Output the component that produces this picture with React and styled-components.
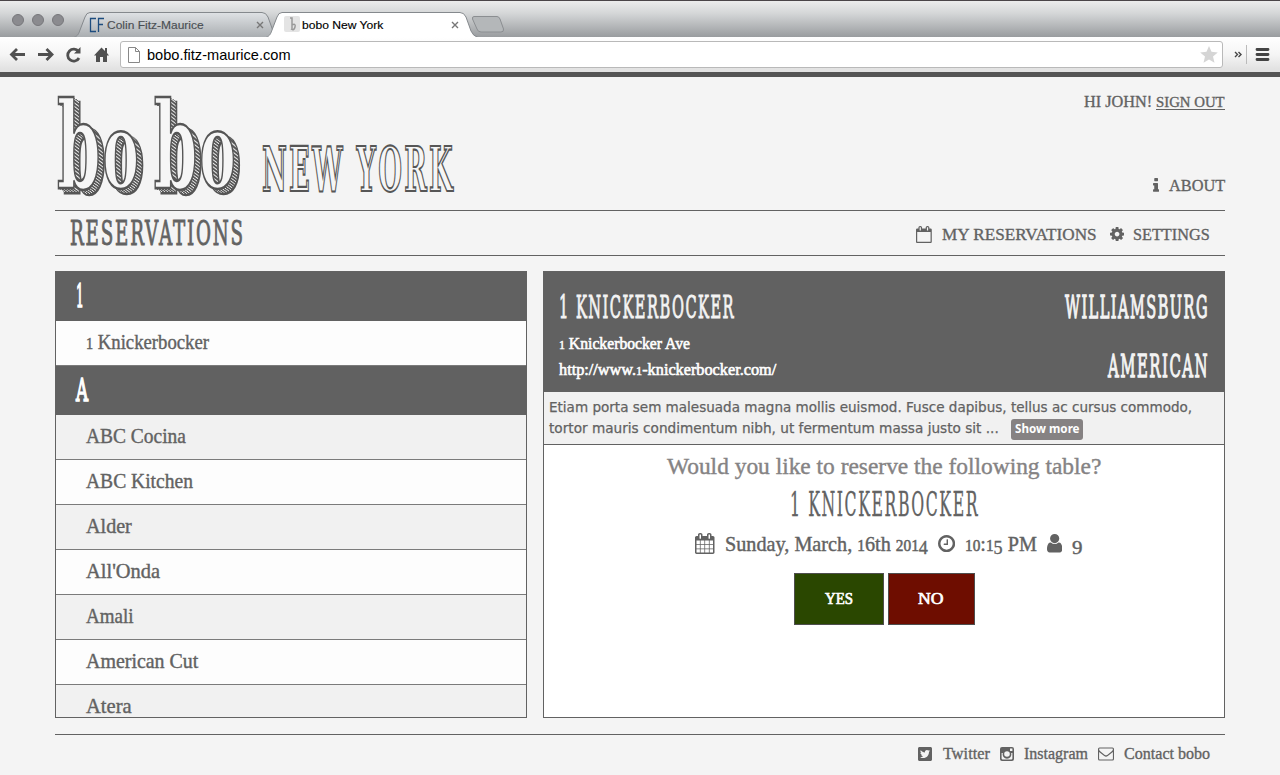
import React, { useLayoutEffect, useRef, useState } from "react";
import styled, { createGlobalStyle } from "styled-components";
import { FaTwitterSquare } from "react-icons/fa";

const slab = '"DejaVu Serif", serif';
const book = '"Liberation Serif", serif';
const ink = "#626262";

const GlobalStyle = createGlobalStyle`
  *, *::before, *::after { box-sizing: border-box; }
  body { margin: 0; background: #f4f4f4; color: ${ink}; font-family: ${book}; overflow: hidden; }
`;

/* ---------- text set to a given measure ---------- */
const FitBox = styled.span`
  display: inline-block;
  flex: none;
  width: ${(p) => p.$w}px;
  white-space: nowrap;
  text-align: left;
`;
const FitInner = styled.span`
  display: inline-block;
  transform-origin: 0 50%;
`;
function Fit({ w, children }) {
  const ref = useRef(null);
  const [scale, setScale] = useState(1);
  useLayoutEffect(() => {
    setScale(w / ref.current.offsetWidth);
  }, [w]);
  return (
    <FitBox $w={w}>
      <FitInner ref={ref} style={{ transform: `scaleX(${scale})` }}>{children}</FitInner>
    </FitBox>
  );
}

const LowDigit = styled.span`
  font-size: 0.76em;
  line-height: 0;
  -webkit-text-stroke: 0.5px currentColor;
`;
const DropDigit = styled.span`
  line-height: 0;
  font-size: 0.9em;
  vertical-align: -0.15em;
`;
const OldStyle = ({ children }) =>
  children.split(/([012]+|[34579]+)/).map((s, i) =>
    /^[012]+$/.test(s) ? <LowDigit key={i}>{s}</LowDigit>
      : /^[34579]+$/.test(s) ? <DropDigit key={i}>{s}</DropDigit> : s
  );

/* ---------- icons ---------- */
const Svg = styled.svg`
  display: block;
  flex: none;
  fill: currentColor;
`;
const paths = {
  calendar: "M192 1664h288v-288h-288v288zm352 0h320v-288h-320v288zm-352-352h288v-320h-288v320zm352 0h320v-320h-320v320zm-352-384h288v-288h-288v288zm736 736h320v-288h-320v288zm-384-736h320v-288h-320v288zm768 736h288v-288h-288v288zm-384-352h320v-320h-320v320zm-352-864v-288q0-13-9.5-22.5t-22.5-9.5h-64q-13 0-22.5 9.5t-9.5 22.5v288q0 13 9.5 22.5t22.5 9.5h64q13 0 22.5-9.5t9.5-22.5zm736 864h288v-320h-288v320zm-384-384h320v-288h-320v288zm384 0h288v-288h-288v288zm32-480v-288q0-13-9.5-22.5t-22.5-9.5h-64q-13 0-22.5 9.5t-9.5 22.5v288q0 13 9.5 22.5t22.5 9.5h64q13 0 22.5-9.5t9.5-22.5zm384-64v1280q0 52-38 90t-90 38h-1408q-52 0-90-38t-38-90v-1280q0-52 38-90t90-38h128v-96q0-66 47-113t113-47h64q66 0 113 47t47 113v96h384v-96q0-66 47-113t113-47h64q66 0 113 47t47 113v96h128q52 0 90 38t38 90z",
  calendarO: "M192 1664h1408v-1024h-1408v1024zm384-1216v-288q0-14-9-23t-23-9h-64q-14 0-23 9t-9 23v288q0 14 9 23t23 9h64q14 0 23-9t9-23zm768 0v-288q0-14-9-23t-23-9h-64q-14 0-23 9t-9 23v288q0 14 9 23t23 9h64q14 0 23-9t9-23zm384-64v1280q0 52-38 90t-90 38h-1408q-52 0-90-38t-38-90v-1280q0-52 38-90t90-38h128v-96q0-66 47-113t113-47h64q66 0 113 47t47 113v96h384v-96q0-66 47-113t113-47h64q66 0 113 47t47 113v96h128q52 0 90 38t38 90z",
  clock: "M1024 544v448q0 14-9 23t-23 9h-320q-14 0-23-9t-9-23v-64q0-14 9-23t23-9h224v-352q0-14 9-23t23-9h64q14 0 23 9t9 23zm416 352q0-148-73-273t-198-198-273-73-273 73-198 198-73 273 73 273 198 198 273 73 273-73 198-198 73-273zm224 0q0 209-103 385.5t-279.5 279.5-385.5 103-385.5-103-279.5-279.5-103-385.5 103-385.5 279.5-279.5 385.5-103 385.5 103 279.5 279.5 103 385.5z",
  user: "M1536 1399q0 109-62.5 187t-150.5 78h-854q-88 0-150.5-78t-62.5-187q0-85 8.5-160.5t31.5-152 58.5-131 94-89 134.5-34.5q131 128 313 128t313-128q76 0 134.5 34.5t94 89 58.5 131 31.5 152 8.5 160.5zm-256-887q0 159-112.5 271.5t-271.5 112.5-271.5-112.5-112.5-271.5 112.5-271.5 271.5-112.5 271.5 112.5 112.5 271.5z",
  info: "M1216 1344v128q0 26-19 45t-45 19h-512q-26 0-45-19t-19-45v-128q0-26 19-45t45-19h64v-384h-64q-26 0-45-19t-19-45v-128q0-26 19-45t45-19h384q26 0 45 19t19 45v576h64q26 0 45 19t19 45zm-128-1152v192q0 26-19 45t-45 19h-256q-26 0-45-19t-19-45v-192q0-26 19-45t45-19h256q26 0 45 19t19 45z",
  cog: "M1152 896q0-106-75-181t-181-75-181 75-75 181 75 181 181 75 181-75 75-181zm512-109v222q0 12-8 23t-20 13l-185 28q-19 54-39 91 35 50 107 138 10 12 10 25t-9 23q-27 37-99 108t-94 71q-12 0-26-9l-138-108q-44 23-91 38-16 136-29 186-7 28-36 28h-222q-14 0-24.5-8.5t-11.5-21.5l-28-184q-49-16-90-37l-141 107q-10 9-25 9-14 0-25-11-126-114-165-168-7-10-7-23 0-12 8-23 15-21 51-66.5t54-70.5q-27-50-41-99l-183-27q-13-2-21-12.5t-8-23.5v-222q0-12 8-23t19-13l186-28q14-46 39-92-40-57-107-138-10-12-10-24 0-10 9-23 26-36 98.5-107.5t94.5-71.5q13 0 26 10l138 107q44-23 91-38 16-136 29-186 7-28 36-28h222q14 0 24.5 8.5t11.5 21.5l28 184q49 16 90 37l142-107q9-9 24-9 13 0 25 10 129 119 165 170 7 8 7 22 0 12-8 23-15 21-51 66.5t-54 70.5q26 50 41 98l183 28q13 2 21 12.5t8 23.5z",
};
const boxes = {
  calendar: [64, 0, 1664, 1792],
  calendarO: [64, 0, 1664, 1792],
  clock: [128, 128, 1536, 1536],
  user: [256, 128, 1280, 1536],
  info: [576, 128, 640, 1408],
  cog: [128, 128, 1536, 1536],
};
function Icon({ name, em }) {
  const b = boxes[name];
  return (
    <Svg width={(b[2] * em) / 1792} height={(b[3] * em) / 1792} viewBox={b.join(" ")}>
      <path d={paths[name]} />
    </Svg>
  );
}

/* ---------- browser chrome ---------- */
const Strip = styled.div`
  height: 37px;
  display: flex;
  align-items: flex-end;
  padding-left: 12px;
  border-top: 1px solid #4b4548;
  background: linear-gradient(#ececec, #d4d6d7 35%, #999c9f);
  font-family: "Liberation Sans", sans-serif;
  font-size: 11.5px;
`;
const Lights = styled.div`
  display: flex;
  gap: 8px;
  align-self: flex-start;
  margin-top: 13px;
  width: 62px;
  span {
    width: 12px;
    height: 12px;
    border-radius: 50%;
    background: #8b8b8f;
    border: 1px solid #77777b;
  }
`;
const TabBox = styled.div`
  position: relative;
  z-index: ${(p) => (p.$active ? 2 : 1)};
  display: flex;
  align-items: center;
  width: ${(p) => p.$w}px;
  height: 25px;
  margin-left: ${(p) => (p.$active ? -14 : 0)}px;
  padding: 0 ${(p) => (p.$active ? 19 : 16)}px 0 ${(p) => (p.$active ? 18 : 15)}px;
  gap: 2px;
  color: ${(p) => (p.$active ? "#000" : "#4b4f53")};
  -webkit-text-stroke: 0.15px currentColor;
`;
const TabShape = styled.svg`
  position: absolute;
  inset: 0;
  z-index: -1;
`;
const TabTitle = styled.span`flex: 1;`;
function Tab({ w, active, icon, title, titleWidth }) {
  const d = `M0 25.5C4 24 5 21 6 18L11 5Q12.500 .5 16 .5H${w - 18}Q${w - 14} .5 ${w - 12} 5L${w - 7} 19Q${w - 5} 24 ${w} 25.5`;
  return (
    <TabBox $w={w} $active={active}>
      <TabShape width={w} height="25">
        <defs>
          <linearGradient id="tabFade" x1="0" y1="0" x2="0" y2="1">
            <stop offset="0" stopColor="#dfe2e5" />
            <stop offset="1" stopColor="#a9adb0" />
          </linearGradient>
        </defs>
        <path d={d} fill={active ? "#fff" : "url(#tabFade)"} stroke="#85898d" />
      </TabShape>
      {icon}
      <TabTitle><Fit w={titleWidth}>{title}</Fit></TabTitle>
      <svg width="8" height="8" stroke="#777" strokeWidth="1.4"><path d="M1 1l6 6M7 1l-6 6" /></svg>
    </TabBox>
  );
}
const NewTab = styled.svg`
  margin: 0 0 4px -7px;
`;
const Toolbar = styled.div`
  height: 40px;
  display: flex;
  align-items: flex-start;
  padding: 4px 10px 0 9px;
  background: linear-gradient(#fff, #f5f5f5 50%, #e2e2e2 92%);
  border-bottom: 5px solid #555;
`;
const NavIcons = styled.svg`
  flex: none;
  width: 111px;
  height: 28px;
`;
const Address = styled.div`
  flex: none;
  width: 1103px;
  height: 27px;
  display: flex;
  align-items: center;
  padding: 0 4px 0 7px;
  gap: 7px;
  background: #fff;
  border: 1px solid #b9b9b9;
  border-radius: 3px;
  color: #000;
  font: 15px "Liberation Sans", sans-serif;
`;
const Url = styled.span`flex: 1;`;
const MenuIcons = styled.svg`
  flex: none;
  width: 38px;
  height: 28px;
  margin-left: 9px;
`;

/* ---------- page ---------- */
const Page = styled.div`
  height: 698px;
  padding: 0 55px;
  background: #f4f4f4;
`;
const Header = styled.header`
  height: 134px;
  display: flex;
  justify-content: space-between;
  border-bottom: 1px solid ${ink};
`;
const Logo = styled.svg`
  display: block;
  width: 420px;
  height: 133px;
  overflow: visible;
`;
const Account = styled.div`
  display: flex;
  flex-direction: column;
  justify-content: space-between;
  align-items: flex-end;
  padding: 15px 0 15px;
`;
const Greeting = styled.div`
  display: flex;
  align-items: baseline;
  gap: 4px;
  font-size: 17px;
  line-height: 19px;
  -webkit-text-stroke: 0.35px currentColor;
`;
const SignOut = styled.a`
  font-size: 15px;
  line-height: 14px;
  border-bottom: 1px solid ${ink};
`;
const NavLink = styled.a`
  display: flex;
  align-items: center;
  gap: ${(p) => p.$gap || 10}px;
  font-size: ${(p) => p.$size || 17.5}px;
  line-height: 20px;
  -webkit-text-stroke: 0.35px currentColor;
  svg { stroke: none; }
`;
const SubBar = styled.nav`
  height: 45px;
  display: flex;
  align-items: center;
  justify-content: space-between;
  padding: 0 15px;
  border-bottom: 1px solid ${ink};
`;
const Heading = styled.h2`
  margin: 0;
  font-family: ${slab};
  font-weight: 400;
  font-size: ${(p) => p.$size || 32}px;
  line-height: ${(p) => p.$line || 40}px;
  letter-spacing: 0.1em;
  -webkit-text-stroke: ${(p) => p.$stroke || 1}px currentColor;
`;
const Links = styled.div`
  display: flex;
  gap: ${(p) => p.$gap}px;
  padding-top: ${(p) => p.$top || 0}px;
`;
const Panels = styled.main`
  display: flex;
  gap: 16px;
  padding: 15px 0 16px;
`;
const Panel = styled.section`
  width: ${(p) => p.$w}px;
  height: 447px;
  overflow: hidden;
  border: 1px solid ${ink};
  background: #fff;
`;
const Letter = styled.div`
  height: 49px;
  padding: 4px 0 0 20px;
  background: #616161;
  color: #fff;
`;
const Row = styled.div`
  height: 45px;
  padding-left: 30px;
  line-height: 43px;
  font-size: 21px;
  background: ${(p) => (p.$alt ? "#f1f1f1" : "#fdfdfd")};
  border-bottom: 1px solid #7b7b7b;
  -webkit-text-stroke: 0.4px currentColor;
`;
const Venue = styled.div`
  height: 120px;
  display: flex;
  justify-content: space-between;
  padding: 15px 15px 0;
  background: #616161;
  color: #f4f4f4;
`;
const VenueSide = styled.div`
  display: flex;
  flex-direction: column;
  align-items: ${(p) => (p.$right ? "flex-end" : "flex-start")};
  gap: ${(p) => (p.$right ? 19 : 0)}px;
`;
const VenueLine = styled.div`
  height: 26px;
  line-height: 26px;
  margin-top: ${(p) => p.$top || 0}px;
  font-size: 17px;
  color: #fff;
  -webkit-text-stroke: 0.6px currentColor;
`;
const Blurb = styled.div`
  height: 53px;
  padding: 5px;
  background: #f1f1f1;
  border-bottom: 1px solid ${ink};
  font: 14px/21px "DejaVu Sans", sans-serif;
  -webkit-text-stroke: 0.25px currentColor;
`;
const BlurbLine = styled.div`
  height: 21px;
  display: flex;
  align-items: center;
  gap: 12px;
`;
const More = styled.button`
  height: 21px;
  width: 72px;
  margin: 2px 0 0;
  padding: 0 0 2px;
  border: 0;
  border-radius: 3px;
  background: #868283;
  color: #fff;
  font: bold 12px "Noto Sans", sans-serif;
  -webkit-text-stroke: 0;
`;
const Confirm = styled.div`
  display: flex;
  flex-direction: column;
  align-items: center;
  padding-top: 5px;
`;
const Question = styled.div`
  font-size: 24px;
  line-height: 32px;
  color: #858384;
  -webkit-text-stroke: 0.4px currentColor;
`;
const Details = styled.div`
  height: 28px;
  margin-top: 3px;
  padding-left: 9px;
  display: flex;
  align-items: center;
  gap: 10px;
  font-size: 21px;
  line-height: 28px;
  -webkit-text-stroke: 0.4px currentColor;
  svg { stroke: none; margin-bottom: 1px; }
`;
const Buttons = styled.div`
  display: flex;
  gap: 4px;
  margin-top: 15px;
`;
const Choice = styled.button`
  width: ${(p) => p.$w}px;
  height: 52px;
  padding: 0 0 1px;
  border: 1px solid #4e4e4e;
  background: ${(p) => p.$bg};
  color: #fff;
  font: 17px ${book};
  -webkit-text-stroke: 0.7px currentColor;
`;
const Footer = styled.footer`
  display: flex;
  justify-content: flex-end;
  padding: 9px 15px 0;
  border-top: 1px solid ${ink};
`;

const groups = [
  { letter: "1", w: 9, rows: [["1 Knickerbocker", 123]] },
  {
    letter: "A",
    w: 14,
    rows: [["ABC Cocina", 100], ["ABC Kitchen", 107], ["Alder", 46], ["All'Onda", 74], ["Amali", 48], ["American Cut", 112], ["Atera", 46]],
  },
];

/* Outlined, hatched wordmark */
function Wordmark() {
  return (
    <Logo viewBox="0 0 420 133">
      <defs>
        <pattern id="hatch" width="3" height="3" patternUnits="userSpaceOnUse" patternTransform="rotate(32)">
          <rect width="3" height="3" fill="#555" />
          <rect width="3" height="1" fill="#f4f4f4" />
        </pattern>
      </defs>
      {[6, 5, 4, 3, 2, 1].map((n) => (
        <use key={n} href="#bobo" x={n} y={n * 0.75} fill={n === 6 ? "#555" : "url(#hatch)"} stroke={n === 6 ? "#555" : "none"} strokeWidth="2.6" />
      ))}
      <g fill="#f6f6f6" stroke="#555" strokeWidth="2.6">
        <g id="bobo">
          <text transform="translate(2 111) scale(.52 1)" fontFamily="DejaVu Serif, serif" fontWeight="700" fontSize="120" x="0 88 186 274">
            b<tspan fontSize="104">o</tspan>b<tspan fontSize="104">o</tspan>
          </text>
        </g>
      </g>
      <text transform="translate(207 114)" opacity=".99" fontFamily="DejaVu Serif, serif" fontWeight="700" fontSize="62" fill="#f7f7f7" stroke="#555" strokeWidth="2.2" textLength="193" lengthAdjust="spacingAndGlyphs" letterSpacing="5">NEW YORK</text>
    </Logo>
  );
}

export default function App() {
  return (
    <>
      <GlobalStyle />
      <Strip>
        <Lights><span /><span /><span /></Lights>
        <Tab w={206} title="Colin Fitz-Maurice" titleWidth={97} icon={
          <svg width="16" height="16" fill="none" stroke="#1d4c7e" strokeWidth="1.3"><path d="M7 1.500H1.500V14.500H7M9.500 15V1.500H15M9.500 7.500H14" /></svg>
        } />
        <Tab w={212} active title="bobo New York" titleWidth={81} icon={
          <svg width="16" height="17"><rect width="16" height="16" rx="2" fill="#e4e4e4" /><path d="M6 2h2v11M8 9q4-2 3 2t-4 2" fill="none" stroke="#999" strokeWidth="1.5" /></svg>
        } />
        <NewTab width="34" height="17">
          <path d="M3 .5H26Q28 .5 29 3L32.500 13Q33 16 30 16H10Q7 16 6 13L1.500 3Q1 .5 3 .5Z" fill="#b4b7b9" stroke="#8b8e91" />
        </NewTab>
      </Strip>
      <Toolbar>
        <NavIcons viewBox="0 0 111 28" fill="none" stroke="#505050" strokeWidth="2.8">
          <path d="M16 13.500H3M8 8L2.500 13.500 8 19M29 13.500H42M37.500 8l5.500 5.500-5.500 5.500" />
          <path d="M69.500 10.500A6 6 0 1 0 70 17" />
          <path d="M71.500 6v6.500H65Z" fill="#505050" stroke="none" />
          <path d="M85 14.500L92.500 6.500l3.500 3.500V7h2v5l2 2.500h-2V21h-4v-5h-3v5h-4v-6.500Z" fill="#505050" stroke="none" />
        </NavIcons>
        <Address>
          <svg width="12" height="16" fill="#fff" stroke="#888"><path d="M.5 .5H7.500L11.500 4.500V15.500H.5ZM7.500 .5V4.500H11.500" /></svg>
          <Url><Fit w={144}>bobo.fitz-maurice.com</Fit></Url>
          <svg width="18" height="17" fill="#d5d5d5"><path d="M9 0l2.500 5.800 6.300.6-4.800 4.200 1.500 6.200L9 13.500l-5.500 3.300 1.500-6.200L.2 6.400l6.300-.6Z" /></svg>
        </Address>
        <MenuIcons viewBox="0 0 38 28" fill="none" stroke="#444">
          <path d="M3 11l2.500 2.500L3 16M6.500 11l2.500 2.500L6.500 16" strokeWidth="1.400" />
          <path d="M14.500 4V23" stroke="#bbb" />
          <path d="M25 8.500H36M25 13.500H36M25 18.500H36" strokeWidth="2.800" strokeLinecap="round" />
        </MenuIcons>
      </Toolbar>
      <Page>
        <Header>
          <Wordmark />
          <Account>
            <Greeting>
              <Fit w={68}>HI JOHN!</Fit>
              <SignOut><Fit w={69}>SIGN OUT</Fit></SignOut>
            </Greeting>
            <NavLink><Icon name="info" em={17.500} /><Fit w={56}>ABOUT</Fit></NavLink>
          </Account>
        </Header>
        <SubBar>
          <Heading $size={34}><Fit w={175}>RESERVATIONS</Fit></Heading>
          <Links $gap={13} $top={2}>
            <NavLink><Icon name="calendarO" em={17} /><Fit w={155}>MY RESERVATIONS</Fit></NavLink>
            <NavLink $gap={9}><Icon name="cog" em={16.500} /><Fit w={77}>SETTINGS</Fit></NavLink>
          </Links>
        </SubBar>
        <Panels>
          <Panel $w={472}>
            {groups.map((g) => (
              <React.Fragment key={g.letter}>
                <Letter><Heading $size={31} $stroke={1.6}><Fit w={g.w}>{g.letter}</Fit></Heading></Letter>
                {g.rows.map(([name, w], i) => (
                  <Row key={name} $alt={g.letter === "A" && i % 2 === 0}>
                    <Fit w={w}><OldStyle>{name}</OldStyle></Fit>
                  </Row>
                ))}
              </React.Fragment>
            ))}
          </Panel>
          <Panel $w={682}>
            <Venue>
              <VenueSide>
                <Heading><Fit w={176}>1 KNICKERBOCKER</Fit></Heading>
                <VenueLine $top={4}><Fit w={131}><OldStyle>1 Knickerbocker Ave</OldStyle></Fit></VenueLine>
                <VenueLine><Fit w={217}><OldStyle>http://www.1-knickerbocker.com/</OldStyle></Fit></VenueLine>
              </VenueSide>
              <VenueSide $right>
                <Heading $stroke={1.3}><Fit w={144}>WILLIAMSBURG</Fit></Heading>
                <Heading $stroke={1.3}><Fit w={101}>AMERICAN</Fit></Heading>
              </VenueSide>
            </Venue>
            <Blurb>
              <BlurbLine><Fit w={643}>Etiam porta sem malesuada magna mollis euismod. Fusce dapibus, tellus ac cursus commodo,</Fit></BlurbLine>
              <BlurbLine>
                <Fit w={450}>tortor mauris condimentum nibh, ut fermentum massa justo sit ...</Fit>
                <More><Fit w={65}>Show more</Fit></More>
              </BlurbLine>
            </Blurb>
            <Confirm>
              <Question><Fit w={434}>Would you like to reserve the following table?</Fit></Question>
              <Heading $size={34} $line={45} $stroke={0.4}><Fit w={189}>1 KNICKERBOCKER</Fit></Heading>
              <Details>
                <Icon name="calendar" em={21} />
                <Fit w={203}><OldStyle>Sunday, March, 16th 2014</OldStyle></Fit>
                <Icon name="clock" em={20} />
                <Fit w={72}><OldStyle>10:15 PM</OldStyle></Fit>
                <Icon name="user" em={21.500} />
                <Fit w={10}><OldStyle>9</OldStyle></Fit>
              </Details>
              <Buttons>
                <Choice $w={90} $bg="#2a4700"><Fit w={28}>YES</Fit></Choice>
                <Choice $w={87} $bg="#6e0d00"><Fit w={26}>NO</Fit></Choice>
              </Buttons>
            </Confirm>
          </Panel>
        </Panels>
        <Footer>
          <Links $gap={10}>
            <NavLink $size={17}><FaTwitterSquare size={16} /><Fit w={47}>Twitter</Fit></NavLink>
            <NavLink $size={17}>
              <Svg width="14" height="14" viewBox="0 0 14 14">
                <path fillRule="evenodd" d="M2 0H12Q14 0 14 2V12Q14 14 12 14H2Q0 14 0 12V2Q0 0 2 0ZM1.600 6V11.600Q1.600 12.400 2.400 12.400H11.600Q12.400 12.400 12.400 11.600V6H11.200A4.400 4.400 0 1 1 2.800 6ZM10 1.600V4H12.400V1.600ZM7 4.200A2.800 2.800 0 1 0 7 9.800A2.800 2.800 0 1 0 7 4.200Z" />
              </Svg>
              <Fit w={64}>Instagram</Fit>
            </NavLink>
            <NavLink $size={17}>
              <Svg width="16" height="14" viewBox="0 0 16 14">
                <path fillRule="evenodd" d="M1.500 .5H14.500Q16 .5 16 2V12Q16 13.500 14.500 13.500H1.500Q0 13.500 0 12V2Q0 .5 1.500 .5ZM1.100 5V11.800Q1.100 12.400 1.700 12.400H14.300Q14.900 12.400 14.900 11.800V5L9.800 9Q8 10.400 6.200 9ZM1.100 2.200Q1.100 3.400 2.200 4.300L6.800 7.900Q8 8.800 9.200 7.900L13.800 4.300Q14.900 3.400 14.900 2.200Q14.900 1.600 14.300 1.600H1.700Q1.100 1.600 1.100 2.200Z" />
              </Svg>
              <Fit w={86}>Contact bobo</Fit>
            </NavLink>
          </Links>
        </Footer>
      </Page>
    </>
  );
}
